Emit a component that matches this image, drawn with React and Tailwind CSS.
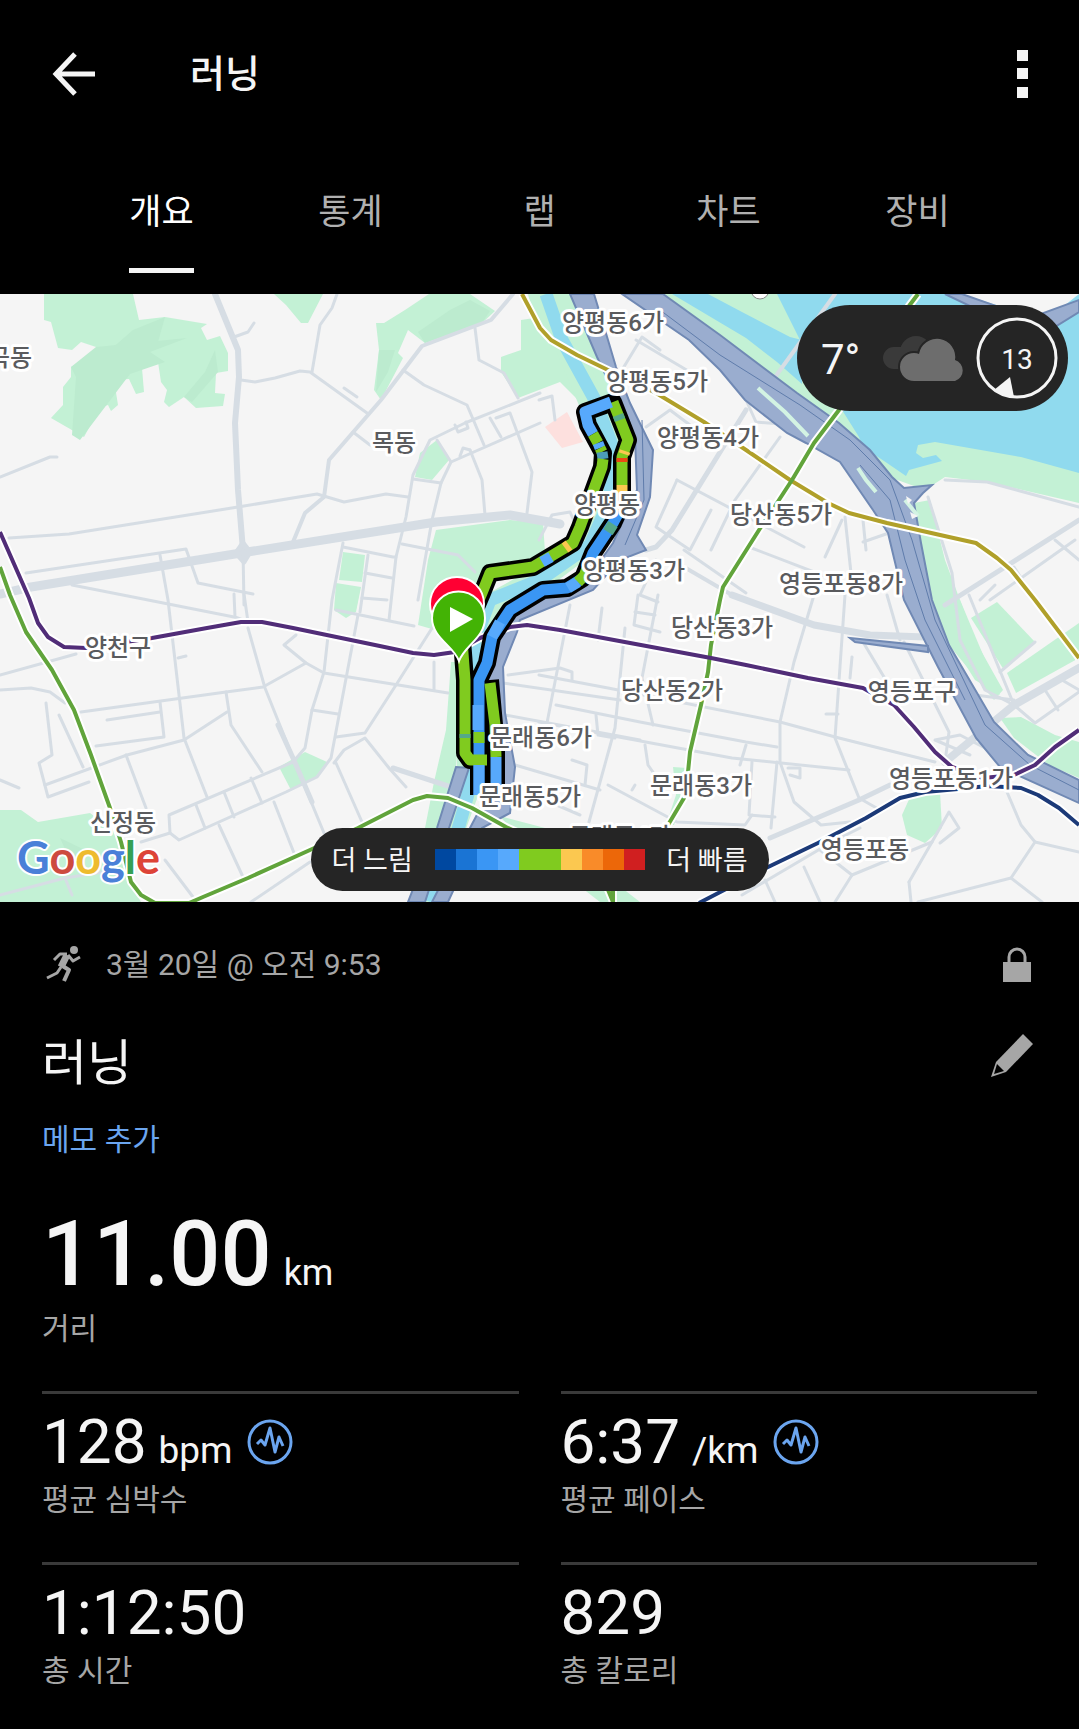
import React, { useState } from 'react';

const TABS = ['개요', '통계', '랩', '차트', '장비'];

const PACE_COLORS = ['#0048a0', '#1a74d4', '#3a96f4', '#57a9fc', '#80cb1f', '#80cb1f', '#fbc850', '#f98b29', '#ec6709', '#d01f20'];

const STATS = [
    { value: '128', unit: 'bpm', label: '평균 심박수', pulse: true },
    { value: '6:37', unit: '/km', label: '평균 페이스', pulse: true },
    { value: '1:12:50', label: '총 시간' },
    { value: '829', label: '총 칼로리' },
];

const PARKS = [
    '44,294 133,294 139,320 165,317 207,324 201,328 207,340 220,336 228,353 228,371 216,373 215,393 225,394 223,406 196,408 184,397 169,407 164,402 167,390 161,382 158,362 142,368 144,392 136,394 129,379 114,380 118,405 111,411 108,405 85,412 91,424 84,437 51,418 63,405 63,387 71,377 71,367 96,353 96,347 81,342 72,350 58,348 51,322 44,320',
    '274,294 323,294 308,323 301,323 286,305',
    '429,294 470,294 495,311 482,323 425,343 408,330 398,353 403,358 381,400 374,390 379,350 376,323 384,323 405,310',
    '528,294 572,294 600,360 616,400 590,412 560,382 518,398 501,372 501,357 521,350 521,320 534,318',
    '437,440 449,460 432,480 415,477 420,453',
    '436,530 510,520 543,523 545,552 520,568 490,570 470,640 418,625 428,560',
    '343,552 365,555 362,582 339,580',
    '336,583 361,587 356,612 346,618 334,610',
    '279,767 305,752 327,762 315,778 291,790',
    '0,810 21,810 38,822 90,813 119,835 131,885 141,902 0,902',
    '451,662 462,662 456,770 440,828 425,828 434,782 446,730',
    '663,294 1079,294 1079,503 987,482 945,477 925,490 892,478 870,450 839,423 797,393',
    '921,543 932,600 949,645 994,700 1003,690 975,640 945,560 930,500 914,503',
    '940,600 960,600 1000,695 975,680 950,640',
    '971,618 997,602 1035,642 1004,670',
    '1007,673 1079,623 1079,658 1016,693',
    '1000,718 1021,717 1055,735 1079,742 1079,778 1049,765 1014,738',
    '911,795 940,792 942,828 925,843 907,835 902,815',
    '673,767 687,768 684,798 674,825 666,825 676,795',
    '500,816 545,828 640,902 600,902 520,840',
];

const PARK_SHADES = [
    '96,347 187,338 150,352 165,362 130,374 80,440 72,435 76,377 71,367',
    '133,330 165,317 158,342 110,350',
    '205,372 215,350 218,372 192,402 184,397',
    '450,310 470,300 490,311 482,323 425,343 418,332',
    '379,350 395,350 388,372 376,392',
    '60,838 85,850 70,860',
];

const WATER = [
    '672,294 708,294 742,312 790,337 802,340 802,384 777,362 746,338',
    '777,294 960,294 1079,294 1079,473 1021,457 935,442 918,445 916,453 923,458 936,455 942,461 909,470 906,476 887,463 863,447 859,437 842,410 800,340',
];

const ROADS = [
    '241,380 255,382 275,378 300,371 310,372 367,413',
    '337,294 332,308 320,325 312,372',
    '9,538 69,534 138,523 238,507 317,494 344,502 386,494 408,497',
    '26,573 186,549 198,583 253,594',
    '160,555 168,600 184,738 207,797',
    '72,585 138,598 234,617',
    '0,477 50,457 57,457',
    '234,337 248,332 254,323',
    '344,388 357,397',
    '353,432 370,445',
    '403,370 424,385 467,405 484,445',
    '475,328 479,360 504,373 518,398',
    '540,393 465,423 430,440 413,475 406,517 396,557 389,620',
    '540,423 451,462 441,483 432,520 418,600',
    '496,418 510,413 532,472 527,513',
    '490,418 501,437',
    '470,450 482,480 485,515',
    '437,440 451,462',
    '455,425 458,432 468,428 466,422',
    '460,456 463,448 470,450',
    '413,479 441,483',
    '343,547 393,557 396,557',
    '343,543 332,600 324,672 312,710 305,748 293,762 169,815 170,833 179,840 286,792 317,777 331,758 358,615',
    '368,555 360,612',
    '365,573 392,578',
    '336,610 414,626',
    '362,598 387,600',
    '402,544 458,555 475,572',
    '312,710 338,714',
    '0,675 76,654',
    '0,690 31,688 50,692 65,703',
    '81,712 226,692 263,687 306,663 284,645 296,635',
    '248,628 265,688 293,758 324,833',
    '234,594 235,617 248,622 244,594',
    '226,692 231,725 262,772',
    '45,785 127,755 184,740 227,712',
    '46,703 52,755 39,763 48,797 89,782',
    '59,715 83,767',
    '107,720 160,712',
    '160,702 164,737 96,746',
    '126,755 146,808',
    '0,780 19,788',
    '178,658 186,656',
    '306,663 324,673 448,693',
    '434,662 434,690',
    '434,625 396,685 365,733 336,737',
    '334,763 344,750 365,738 389,768 406,787',
    '336,763 362,822',
    '224,792 234,817',
    '196,805 205,828',
    '251,778 262,803',
    '274,802 294,853',
    '219,825 243,877',
    '165,860 193,897',
    '141,842 170,833',
    '251,902 310,862',
    '0,895 65,878 103,872',
    '65,878 72,895',
    '622,370 642,337 660,350',
    '636,340 690,372',
    '646,427 670,410 690,425',
    '746,400 756,422 794,425',
    '677,480 656,527 690,550 711,510',
    '677,480 804,547',
    '684,550 746,593',
    '780,437 735,500 711,550',
    '842,520 825,557',
    '845,517 851,573',
    '863,520 866,550',
    '863,542 886,534',
    '749,547 835,580',
    '656,560 640,595 658,602',
    '570,605 546,728',
    '602,608 598,640',
    '539,675 608,688 780,722 839,738 935,762',
    '556,705 640,722 746,742 777,747',
    '539,722 608,735 732,758 849,770',
    '508,675 560,668 572,672 572,680',
    '503,683 620,700',
    '505,715 640,740',
    '515,765 600,790',
    '625,628 615,728 589,822',
    '638,595 634,625 660,632',
    '658,595 642,678 653,725',
    '635,612 655,615',
    '596,715 598,735 615,738',
    '645,745 648,765 655,775',
    '572,760 587,765 585,785',
    '814,595 794,662 780,722 780,762 794,802 821,825 850,822',
    '845,595 835,738 859,798 880,810',
    '863,642 887,682',
    '904,642 949,732 945,762',
    '887,595 900,640',
    '852,657 850,678',
    '826,714 838,714',
    '742,895 832,842 860,828',
    '918,902 1011,878 1035,842 1079,852',
    '1007,792 1021,825 1035,842',
    '1011,878 1042,902',
    '909,882 932,842 949,812 959,828 940,843',
    '852,875 932,842',
    '909,882 911,902',
    '852,875 820,850',
    '852,875 835,902',
    '608,785 677,822 745,825 752,815',
    '746,745 740,765',
    '777,762 771,828',
    '752,762 749,815 775,817',
    '632,790 635,785',
    '790,775 800,778 800,768 788,768',
    '545,800 580,815',
    '945,480 987,482 1079,507',
    '928,497 952,573 960,640 985,690 1014,705',
    '1055,540 1079,560',
    '1014,567 1035,600',
    '980,600 995,585',
    '969,595 1014,705',
    '990,600 1075,540',
    '1035,642 1000,672',
    '945,675 975,695 1014,700',
    '1014,705 1035,723 1079,692',
    '1045,690 1058,710',
    '1062,680 1079,690',
    '970,755 935,740 960,735 985,748',
    '539,540 552,515 570,512 578,530',
    '539,400 552,396 555,420',
    '804,867 820,902',
    '765,880 775,902',
];

const MAJOR_ROADS = [
    { points: '215,294 238,350 239,377 235,423 238,490 243,550', width: 6 },
    { points: '243,550 244,605', width: 3 },
    { points: '513,294 491,320 422,346 381,400 329,460 324,497 305,513 293,542', width: 4 },
    { points: '0,594 31,587 241,553 436,522 510,515 560,524', width: 9 },
    { points: '236,553 243,543 250,552 244,562 236,553', width: 5 },
    { points: '646,550 656,547 672,530 746,410', width: 5 },
    { points: '773,380 835,294', width: 4 },
    { points: '732,595 814,625 870,635 925,637', width: 7 },
    { points: '672,560 732,595', width: 4 },
    { points: '770,838 859,800 890,785', width: 5 },
    { points: '1079,520 945,605', width: 5 },
    { points: '1079,668 1014,705 945,762', width: 8 },
    { points: '393,768 451,787', width: 5 },
    { points: '278,725 293,758 312,802', width: 5 },
];

const RAIL_LINES = [
    { color: '#b0a02a', points: '522,294 540,328 551,340 577,355 608,370 656,393 704,422 746,450 790,480 828,503 849,513 887,523 949,537 976,543 997,558 1011,570 1035,600 1079,658' },
    { color: '#61a43b', points: '918,294 909,306 839,410 814,443 792,480 777,503 759,530 723,587 720,600 711,645 708,672 701,705 690,752 687,782 684,798 668,825 613,862 613,902' },
    { color: '#61a43b', points: '0,567 10,595 26,632 52,670 74,710 91,755 110,808 121,842 131,882 141,895 155,903 189,903 203,897 248,878 310,850 358,828 413,800 427,796 448,798 472,808 506,827 600,870 613,902' },
    { color: '#512d78', points: '0,532 29,598 38,623 48,637 64,647 86,648 152,638 207,628 241,622 262,622 293,628 375,645 413,653 434,655 455,652 480,638 510,627 527,625 560,630 711,658 746,665 808,678 863,688 870,692 894,705 914,727 935,752 952,767 983,778 1014,775 1035,765 1055,747 1079,730' },
    { color: '#1c3a78', points: '699,903 728,888 766,868 818,843 866,818 900,798 925,792 969,788 987,786 1021,788 1038,795 1059,808 1079,825' },
];

const ROUTE_LOOP = '479,795 479,680 487,663 492,637 510,610 543,590 567,588 583,578 593,553 613,523 622,503 622,457 628,440 613,402 585,412 588,425 603,453 602,467 580,527 573,543 533,567 490,573 482,593 462,640 465,680 465,753 470,760 487,760';
const ROUTE_RETURN = '490,680 496,747 496,788';

const ROUTE_SEGMENTS = [
    { color: '#3a96f4', points: '479,795 479,680 487,663 492,637 510,610 543,590 567,588 580,580' },
    { color: '#57a9fc', points: '478,730 478,705' },
    { color: '#57a9fc', points: '492,637 500,622' },
    { color: '#57a9fc', points: '568,588 578,582' },
    { color: '#80cb1f', points: '578,582 584,576 588,566' },
    { color: '#3a96f4', points: '588,566 593,553 613,523 619,512' },
    { color: '#55a889', points: '608,532 613,524' },
    { color: '#fbc850', points: '620,512 622,503 622,485' },
    { color: '#80cb1f', points: '622,485 622,457 628,440 613,402' },
    { color: '#ec4a12', points: '622,462 622,458' },
    { color: '#fbc850', points: '624,454 625,451' },
    { color: '#55a889', points: '620,420 618,415' },
    { color: '#57a9fc', points: '611,402 585,412 588,425 593,434' },
    { color: '#80cb1f', points: '593,434 598,443' },
    { color: '#57a9fc', points: '598,443 600,448' },
    { color: '#80cb1f', points: '600,448 602,452' },
    { color: '#4d9cb8', points: '602,452 603,459' },
    { color: '#80cb1f', points: '603,459 602,467 580,527 573,543 533,567 490,573 482,593 462,640 465,680 465,753 470,760 487,760' },
    { color: '#fbc850', points: '569,545 565,548' },
    { color: '#57a9fc', points: '551,557 542,562' },
    { color: '#55a889', points: '465,734 465,738' },
    { color: '#80cb1f', points: '479,732 479,743' },
    { color: '#57a9fc', points: '479,765 479,795' },
    { color: '#80cb1f', points: '490,683 495,725 496,757' },
    { color: '#57a9fc', points: '496,757 496,788' },
];

const PLACES = [
    { name: '곡동', x: 10, y: 357 },
    { name: '목동', x: 394, y: 442 },
    { name: '양평동6가', x: 613, y: 322 },
    { name: '양평동5가', x: 657, y: 381 },
    { name: '양평동4가', x: 708, y: 437 },
    { name: '양평동', x: 607, y: 504 },
    { name: '당산동5가', x: 781, y: 514 },
    { name: '양평동3가', x: 634, y: 570 },
    { name: '영등포동8가', x: 841, y: 583 },
    { name: '당산동3가', x: 722, y: 627 },
    { name: '당산동2가', x: 672, y: 690 },
    { name: '영등포구', x: 912, y: 691 },
    { name: '문래동6가', x: 541, y: 737 },
    { name: '문래동5가', x: 530, y: 796 },
    { name: '문래동3가', x: 701, y: 785 },
    { name: '문래동4가', x: 620, y: 836 },
    { name: '영등포동1가', x: 951, y: 778 },
    { name: '영등포동', x: 865, y: 849 },
    { name: '신정동', x: 123, y: 822 },
    { name: '양천구', x: 118, y: 647 },
];

const RouteMap = () => (
    <svg viewBox="0 294 1079 608" className="block h-auto w-full" role="img" aria-label="러닝 경로 지도">
        <rect x="0" y="294" width="1079" height="608" fill="#f5f5f5" />
        <g fill="#c3f1d5">
            {PARKS.map((points) => <polygon key={points} points={points} />)}
        </g>
        <g fill="#bcebcf">
            {PARK_SHADES.map((points) => <polygon key={points} points={points} />)}
        </g>
        <g fill="#90daee">
            {WATER.map((points) => <polygon key={points} points={points} />)}
        </g>
        <polygon points="545,427 567,412 583,442 562,448" fill="#fde0de" />
        <polygon points="962,294 1079,294 1055,313 1030,316" fill="#f5f5f5" />
        <g fill="none" stroke="#d6dde4" strokeLinejoin="round" strokeLinecap="round">
            {ROADS.map((points) => <polyline key={points} points={points} strokeWidth="3" />)}
            {MAJOR_ROADS.map((r) => <polyline key={r.points} points={r.points} strokeWidth={r.width} />)}
        </g>

        {/* Anyangcheon stream and its banks */}
        <g fill="none" strokeLinejoin="round">
            <polyline points="552,294 570,350 595,410 610,450 608,490 590,540 530,585 485,610 470,680 470,780 448,840 425,902" stroke="#c3f1d5" strokeWidth="26" />
            <polyline points="546,294 562,340 595,400 612,445 610,500 590,545 540,580 490,600 475,640 472,780 455,840 430,902" stroke="#90daee" strokeWidth="13" />
        </g>

        {/* riverside expressways */}
        <g fill="#9aadcf" stroke="#7089b4" strokeWidth="2">
            <polygon points="570,294 594,294 608,340 616,367 630,403 653,450 650,497 637,535 646,550 620,560 593,590 520,620 517,632 503,667 505,713 515,767 510,813 482,828 448,902 432,902 470,828 490,790 485,690 485,650 510,615 590,575 613,543 637,490 635,437 597,357" />
            <polygon points="456,767 469,768 449,828 425,902 408,902 437,828" />
            <polygon points="622,294 663,294 720,335 797,393 839,423 870,450 892,477 904,488 932,485 923,493 914,503 921,543 932,600 949,645 994,722 1028,755 1079,780 1079,803 1000,767 976,738 938,667 904,600 888,533 873,510 840,462 806,443 787,433 745,400 720,370 689,340" />
            <polygon points="945,294 962,294 1030,318 1079,300 1079,312 1050,330 1020,330" />
            <polygon points="850,638 928,646 928,652 855,642" />
        </g>
        <g fill="none" stroke="#5f7cab" strokeWidth="1">
            <polyline points="660,310 720,355 800,405 850,440 890,480 912,540 935,620 985,725 1030,765 1079,790" />
            <polyline points="860,465 890,500 905,560 925,620 965,700" />
            <polyline points="642,420 644,500 625,545" />
        </g>
        <g fill="none" stroke="#d3f3e3" strokeWidth="4">
            <polyline points="758,388 785,412 808,436" />
            <polyline points="858,468 866,480 876,492" />
            <polyline points="905,500 918,516" />
        </g>
        <path d="M906 496l6 4-4 4zM910 512l8 4-6 3z" fill="#f5f5f5" />
        <circle cx="760" cy="290" r="9" fill="#ffffff" stroke="#8a8a8a" strokeWidth="1" />

        <g fill="none" strokeLinejoin="round">
            {RAIL_LINES.map((l) => <polyline key={l.points} points={l.points} stroke="#ffffff" strokeWidth="8" />)}
            {RAIL_LINES.map((l) => <polyline key={l.points} points={l.points} stroke={l.color} strokeWidth="4" />)}
        </g>

        <g fill="none" strokeLinejoin="round">
            <polyline points={ROUTE_LOOP} stroke="#000000" strokeWidth="18" />
            <polyline points={ROUTE_RETURN} stroke="#000000" strokeWidth="18" />
            {ROUTE_SEGMENTS.map((s) => <polyline key={s.points} points={s.points} stroke={s.color} strokeWidth="11" />)}
        </g>

        <g
            className="font-['Roboto','Noto_Sans_CJK_KR',sans-serif] text-[24px] font-medium"
            textAnchor="middle"
            fill="#5a5b5e"
            stroke="#ffffff"
            strokeWidth="6"
            strokeLinejoin="round"
            paintOrder="stroke"
        >
            {PLACES.map((p) => <text key={p.name} x={p.x} y={p.y + 9}>{p.name}</text>)}
        </g>

        <circle cx="457" cy="604" r="27" fill="#ff0033" stroke="#ffffff" strokeWidth="2" />
        <path d="M459 661C454 646 432 638 432 618a26 26 0 0 1 53 0C485 638 464 646 459 661z" fill="#43b305" stroke="#ffffff" strokeWidth="2" />
        <polygon points="450,607 473,619 450,632" fill="#ffffff" />

        <text x="17" y="874" className="font-['Lato',sans-serif] text-[45px] font-bold" stroke="#ffffff" strokeWidth="4" paintOrder="stroke">
            <tspan fill="#4a80d8">G</tspan>
            <tspan fill="#cd4a3f">o</tspan>
            <tspan fill="#eebb2e">o</tspan>
            <tspan fill="#4a80d8">g</tspan>
            <tspan fill="#35a055">l</tspan>
            <tspan fill="#dd4438">e</tspan>
        </text>
    </svg>
);

const WeatherPill = () => (
    <div className="absolute top-[11px] right-[11px] flex h-[106px] w-[271px] items-center rounded-full bg-[#252525] pl-6 text-[#f5f5f5]">
        <span className="pt-1 text-[42px] leading-none">7°</span>
        <svg width="86" height="48" viewBox="0 0 86 48" className="ml-auto">
            <g fill="#3a3a3a">
                <circle cx="12" cy="24" r="11" />
                <circle cx="34" cy="18" r="16" />
                <path d="M12 13h22v22H12z" />
            </g>
            <g fill="#6d6d6d" stroke="#252525" strokeWidth="4" paintOrder="stroke">
                <path d="M32 47a14 14 0 0 1 0-28q3 0 5 1a18 18 0 0 1 36 6 11 11 0 0 1 0 21z" />
            </g>
        </svg>
        <svg width="82" height="82" viewBox="0 0 82 82" className="mr-2.5 ml-2">
            <circle cx="41" cy="41" r="39" fill="none" stroke="#f5f5f5" strokeWidth="3" />
            <polygon points="34,60 18,73 28,78 38,80" fill="#f5f5f5" />
            <text x="41" y="52" textAnchor="middle" fill="#f5f5f5" className="text-[28px]">13</text>
        </svg>
    </div>
);

const PaceLegend = () => (
    <div className="absolute bottom-[11px] left-1/2 flex h-[63px] w-[458px] -translate-x-1/2 items-center justify-between rounded-full bg-[#252525] px-[21px] text-[27px] leading-none text-[#f5f5f5]">
        <span className="pt-[3px]">더 느림</span>
        <div className="flex h-[21px] w-[210px]">
            {PACE_COLORS.map((color, i) => (
                <span key={i} className="flex-1" style={{ backgroundColor: color }} />
            ))}
        </div>
        <span className="pt-[3px]">더 빠름</span>
    </div>
);

const PulseIcon = () => (
    <svg width="46" height="46" viewBox="0 0 46 46" fill="none" stroke="#6ba5ef">
        <circle cx="23" cy="23" r="21" strokeWidth="3" />
        <path d="M10 25l4-4 4 5 5-17 5 24 4-15 4 9" strokeWidth="3" strokeLinejoin="round" />
    </svg>
);

const Stat = ({ stat }) => (
    <div className="h-[171px] border-t-[3px] border-[#3a3a3a] pt-4">
        <div className="flex h-[64px] items-start">
            <div className="flex items-baseline gap-3 leading-[64px]">
                <span className="text-[62px]">{stat.value}</span>
                {stat.unit && <span className="text-[37px]">{stat.unit}</span>}
            </div>
            {stat.pulse && (
                <button type="button" aria-label={`${stat.label} 차트`} className="ml-3.5 self-center">
                    <PulseIcon />
                </button>
            )}
        </div>
        <div className="mt-2 text-[30px] leading-[36px] text-[#a6a6a6]">{stat.label}</div>
    </div>
);

const App = () => {
    const [activeTab, setActiveTab] = useState('개요');

    return (
        <div className="min-h-screen bg-black font-['Roboto','Noto_Sans_CJK_KR',sans-serif] text-[#f5f5f5]">
            <header className="flex h-[148px] items-center px-[50px]">
                <button type="button" aria-label="뒤로">
                    <svg width="48" height="48" viewBox="0 0 48 48" fill="none" stroke="#f5f5f5" strokeWidth="5">
                        <path d="M45 24H6M25 4L6 24l19 20" />
                    </svg>
                </button>
                <h1 className="ml-[92px] text-[38px] leading-[48px] font-medium">러닝</h1>
                <button type="button" aria-label="더보기" className="ml-auto">
                    <svg width="12" height="48" viewBox="0 0 12 48" fill="#f5f5f5">
                        <path d="M0 0h11v11H0zM0 18h11v11H0zM0 37h11v11H0z" />
                    </svg>
                </button>
            </header>

            <nav role="tablist" className="grid h-[146px] grid-cols-5 px-[67px]">
                {TABS.map((tab) => (
                    <button
                        key={tab}
                        type="button"
                        role="tab"
                        aria-selected={tab === activeTab}
                        onClick={() => setActiveTab(tab)}
                        className={`flex flex-col items-center pt-[42px] text-[35px] leading-[46px] ${tab === activeTab ? 'text-white' : 'text-[#b0b0b0]'}`}
                    >
                        <span className={`border-b-[5px] pb-8 ${tab === activeTab ? 'border-[#f5f5f5]' : 'border-transparent'}`}>{tab}</span>
                    </button>
                ))}
            </nav>

            <section className="relative">
                <RouteMap />
                <WeatherPill />
                <PaceLegend />
            </section>

            <main className="px-[42px]">
                <div className="flex items-center pt-[41px]">
                    <svg width="42" height="44" viewBox="0 0 42 44" fill="none" stroke="#a6a6a6" strokeLinejoin="round">
                        <circle cx="32" cy="7" r="4" fill="#a6a6a6" stroke="none" />
                        <path d="M12 17l6-6h7" strokeWidth="3" />
                        <path d="M25 12l-6 12" strokeWidth="7" />
                        <path d="M26 12l5 6 7-4" strokeWidth="3" />
                        <path d="M19 22l8 5-5 11" strokeWidth="4" />
                        <path d="M19 24l-4 6-10 5" strokeWidth="3" />
                    </svg>
                    <span className="ml-[22px] text-[30px] leading-[44px] text-[#a6a6a6]">3월 20일 @ 오전 9:53</span>
                    <svg width="44" height="44" viewBox="0 0 44 44" className="ml-auto" aria-label="비공개">
                        <path d="M16 20v-6a8 8 0 0 1 16 0v6" fill="none" stroke="#a6a6a6" strokeWidth="3" />
                        <path d="M10 19h28v20H10z" fill="#a6a6a6" />
                    </svg>
                </div>

                <div className="mt-[46px] flex items-center">
                    <h2 className="text-[49px] leading-[60px]">러닝</h2>
                    <button type="button" aria-label="제목 편집" className="mb-4 ml-auto">
                        <svg width="48" height="46" viewBox="0 0 48 46">
                            <path d="M34 1l10 10-27 28-15 5 5-15z" fill="#a6a6a6" />
                            <path d="M8 31l7 7-10 3z" fill="#000000" />
                        </svg>
                    </button>
                </div>

                <a href="#memo" className="mt-[27px] inline-block text-[30px] leading-[36px] text-[#6ba5ef]">메모 추가</a>

                <div className="mt-[59px] flex items-baseline gap-3 leading-[76px]">
                    <span className="text-[90px] font-medium">11.00</span>
                    <span className="text-[36px]">km</span>
                </div>
                <div className="text-[30px] leading-[36px] text-[#a6a6a6]">거리</div>

                <div className="mt-11 grid grid-cols-2 gap-x-[42px]">
                    {STATS.map((stat) => <Stat key={stat.label} stat={stat} />)}
                </div>
            </main>
        </div>
    );
};

export default App;
